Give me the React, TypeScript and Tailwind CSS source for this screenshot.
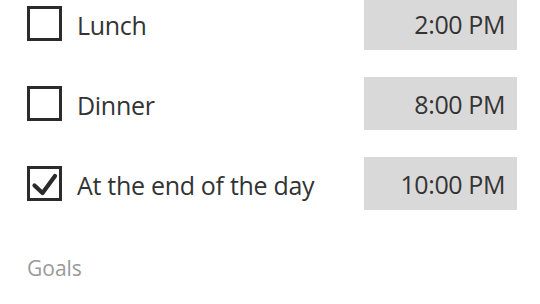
import React from "react";

const ROWS = [
  { label: "Lunch", time: "2:00 PM", checked: false },
  { label: "Dinner", time: "8:00 PM", checked: false },
  { label: "At the end of the day", time: "10:00 PM", checked: true },
];

function Checkbox({ checked }: { checked: boolean }) {
  return (
    <div className="w-[35px] h-[35px] shrink-0 border-[3px] border-[#2b2b2b] flex items-center justify-center">
      {checked && (
        <svg width="29" height="29" viewBox="0 0 29 29" fill="none">
          <path
            d="M4.5 16.5 L12.5 24 L25 7"
            stroke="#2b2b2b"
            strokeWidth="4.2"
            strokeLinecap="round"
            strokeLinejoin="round"
          />
        </svg>
      )}
    </div>
  );
}

export default function App() {
  return (
    <div
      className="w-[540px] h-[304px] overflow-hidden bg-white pl-[27px] pr-[23px]"
      style={{ fontFamily: '"Open Sans", "Noto Sans", sans-serif' }}
    >
      <div className="flex flex-col gap-[27px] mt-[-3px]">
        {ROWS.map((r) => (
          <div key={r.label} className="flex items-center justify-between h-[53px]">
            <div className="flex items-center">
              <Checkbox checked={r.checked} />
              <span className="ml-[15px] mt-[3px] text-[25px] tracking-[-0.3px] text-[#333333] leading-none">
                {r.label}
              </span>
            </div>
            <div className="w-[153px] h-[53px] bg-[#d9d9d9] flex items-center justify-end pr-[12px] pt-[2px] text-[25px] tracking-[-0.4px] text-[#333333] leading-none">
              {r.time}
            </div>
          </div>
        ))}
      </div>
      <div className="mt-[48px] text-[21px] text-[#999999] leading-none">Goals</div>
    </div>
  );
}
